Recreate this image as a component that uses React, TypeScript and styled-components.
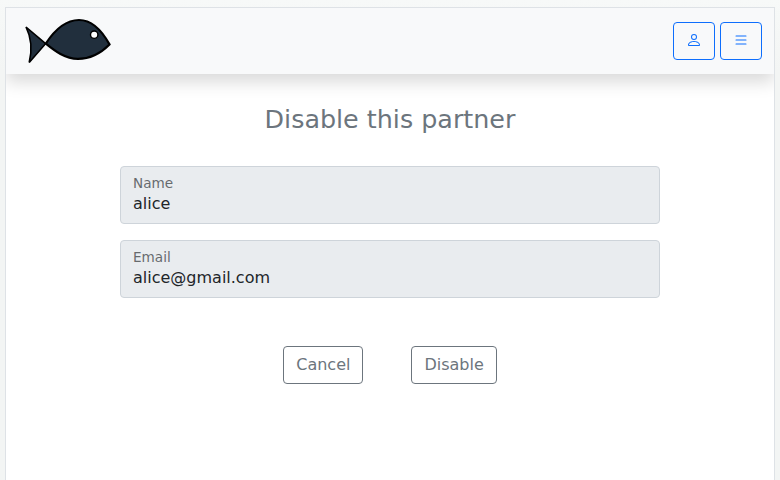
import React from "react";
import styled, { createGlobalStyle } from "styled-components";
import { BsList, BsPerson } from "react-icons/bs";

const GlobalStyle = createGlobalStyle`
  *, *::before, *::after { box-sizing: border-box; }
  html, body { margin: 0; height: 100%; overflow: hidden; }
  body {
    background: #f3f5f4 linear-gradient(#f7f9f8, #f3f5f4 70px);
    color: #212529;
    font-family: "DejaVu Sans", sans-serif;
    font-size: 16px;
    line-height: 1.5;
  }
`;

const Page = styled.div`
  height: 480px;
  padding: 7px 5px 0;
  overflow: hidden;
`;

const Panel = styled.div`
  height: 520px;
  border: 1px solid #dee2e6;
  background: #fff;
  overflow: hidden;
`;

const Header = styled.header`
  display: flex;
  align-items: center;
  justify-content: space-between;
  height: 66px;
  padding: 0 12px 0 16px;
  background: #f8f9fa;
  box-shadow: 0 8px 16px rgba(0, 0, 0, 0.15);
`;

const Logo = styled.svg`
  display: block;
  width: 92px;
  height: 54px;
`;

const Actions = styled.nav`
  display: flex;
  gap: 5px;
`;

const Button = styled.button<{ $tone: "primary" | "secondary" }>`
  height: 38px;
  padding: 6px 12px;
  border: 1px solid ${(p) => (p.$tone === "primary" ? "#0d6efd" : "#6c757d")};
  border-radius: 4px;
  background: transparent;
  color: ${(p) => (p.$tone === "primary" ? "#0d6efd" : "#6c757d")};
  font: inherit;
  line-height: 24px;

  svg {
    display: inline-block;
    vertical-align: -2px;
  }
`;

const Content = styled.main`
  display: flex;
  flex-direction: column;
  align-items: center;
`;

const Title = styled.h1`
  margin: 30px 0 0;
  font-size: 25.4px;
  font-weight: 400;
  line-height: 30px;
  color: #6c757d;
`;

const Form = styled.form`
  display: flex;
  flex-direction: column;
  gap: 16px;
  width: 540px;
  margin-top: 32px;
`;

const Field = styled.label`
  display: flex;
  flex-direction: column;
  height: 58px;
  padding: 6px 12px 0;
  border: 1px solid #ced4da;
  border-radius: 4px;
  background: #e9ecef;
`;

const FieldLabel = styled.span`
  height: 20px;
  line-height: 26px;
  opacity: 0.65;
  transform: scale(0.85);
  transform-origin: 0 0;
`;

const FieldInput = styled.input`
  height: 21px;
  padding: 0;
  border: 0;
  background: transparent;
  color: #212529;
  font: inherit;
  line-height: 21px;
  outline: none;
`;

const ButtonRow = styled.div`
  display: flex;
  justify-content: center;
  gap: 48px;
  margin-top: 32px;
`;

const FishLogo = () => (
  <Logo viewBox="22 14 92 54" aria-label="Fish">
    <g fill="#212f3d" stroke="#000" strokeWidth="2.2" strokeLinejoin="miter">
      <path d="M26 27L45.6 43.7L29.2 62.5Q34 43 26 27Z" strokeWidth="1.6" />
      <path d="M45.8 43.6C54 31 65 20 79 20C91 20 101 29 109.5 44.4C101 53 91 58.8 78 58.8C65 58.8 55 51 45.8 43.6Z" />
      <circle cx="94.2" cy="34.7" r="3.7" fill="#fff" strokeWidth="1.4" />
    </g>
  </Logo>
);

export default function App() {
  return (
    <Page>
      <GlobalStyle />
      <Panel>
        <Header>
          <FishLogo />
          <Actions>
            <Button $tone="primary" aria-label="Account"><BsPerson /></Button>
            <Button $tone="primary" aria-label="Menu"><BsList /></Button>
          </Actions>
        </Header>
        <Content>
          <Title>Disable this partner</Title>
          <Form onSubmit={(e) => e.preventDefault()}>
            <Field>
              <FieldLabel>Name</FieldLabel>
              <FieldInput readOnly value="alice" />
            </Field>
            <Field>
              <FieldLabel>Email</FieldLabel>
              <FieldInput readOnly value="alice@gmail.com" />
            </Field>
            <ButtonRow>
              <Button type="button" $tone="secondary">Cancel</Button>
              <Button type="submit" $tone="secondary">Disable</Button>
            </ButtonRow>
          </Form>
        </Content>
      </Panel>
    </Page>
  );
}
